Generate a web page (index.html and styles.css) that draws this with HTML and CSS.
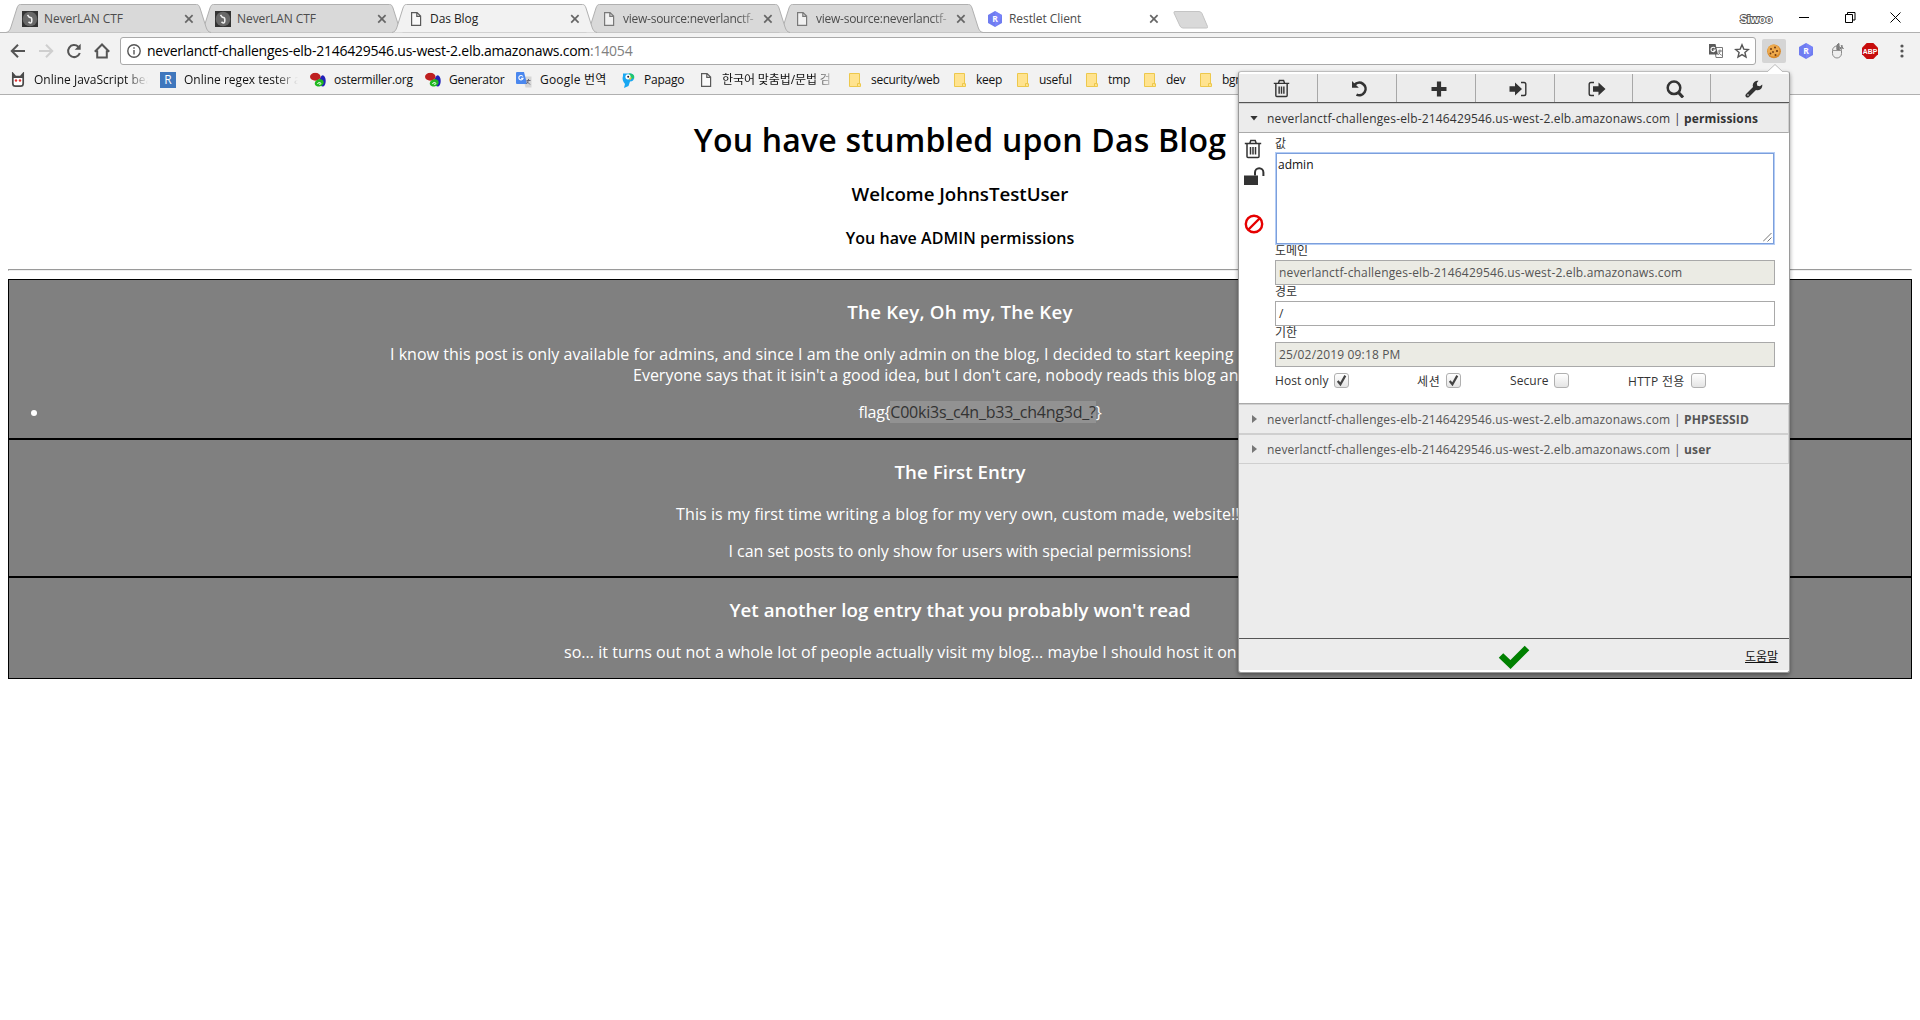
FILE: index.html
```html
<!DOCTYPE html>
<html lang="ko">
<head>
<meta charset="utf-8">
<title>Das Blog</title>
<link rel="stylesheet" href="styles.css">
</head>
<body>
<svg class="defs" width="0" height="0">
  <symbol id="tabshape" viewBox="0 0 205 29"><path d="M0 28.5C3 28 4 26 5 23L11 4C12 1.500 12.500.500 14.500.500H190.500C192.500.500 193 1.500 194 4L200 23C201 26 202 28 205 28.500" /></symbol>
  <symbol id="page" viewBox="0 0 16 16"><path d="M3.600 1.600h5.500l3.500 3.500v9.300h-9zM8.800 1.600v3.800h3.800" fill="#fafafa" stroke="#5a5a5a" stroke-width="1.200"/></symbol>
  <symbol id="x" viewBox="0 0 10 10"><path d="M1.200 1.200l7.400 7.400M8.600 1.200L1.200 8.600" stroke="#666" stroke-width="1.700"/></symbol>
  <symbol id="lan" viewBox="0 0 16 16"><path fill="#333" d="M0 0h16v16H0z"/><circle cx="8" cy="8" r="7.300" fill="#686868"/><path d="M5.500 3.800Q7 6.500 8.500 6.500T9.800 10 6.500 10.800" fill="none" stroke="#eee" stroke-width="1.600"/></symbol>
  <symbol id="hex" viewBox="0 0 16 16"><path d="M8 0l7 4v8l-7 4-7-4V4z" fill="#6f7cf0"/><path d="M8 0l7 4-3 8-4 4z" fill="#7f8aff" opacity=".6"/><text x="8" y="11.300" text-anchor="middle" class="glyph">R</text></symbol>
  <symbol id="oster" viewBox="0 0 17 16"><ellipse cx="13.500" cy="9" rx="3.200" ry="6" fill="#2121b8"/><ellipse cx="5.600" cy="4.500" rx="5.600" ry="4.200" fill="#be2020"/><ellipse cx="9.800" cy="11" rx="4.900" ry="3.800" fill="#20b820" transform="rotate(-18 9.800 11)"/><path d="M8 12.300c0-2 3.500-2.300 3.500-.6 0 1.500-2.300 1.300-2 0" fill="none" stroke="#fff" stroke-width="1"/></symbol>
  <symbol id="folder" viewBox="0 0 16 16"><path d="M2.500 1.500h10v10.500h1v2.500h-11z" fill="#ffe38f" stroke="#edc84c"/><path d="M10.500 14V11.500h3" fill="none" stroke="#edc84c"/></symbol>
  <symbol id="translate" viewBox="0 0 16 16"><path d="M6.500 4.500h8v10H8z" fill="#fff" stroke="#777"/><path d="M1 1h6.500l2.500 10.500H1z" fill="#5b5b5b"/><path d="M7 5.200a2.200 2.200 0 1 0 .3 1.900H5.300" fill="none" stroke="#fff" stroke-width="1.100"/><path d="M10 8h4.200M12 6.500V8c-.2 2-1 3-1.800 4M10.700 9.500c1 1.500 1.600 2 3 2.800" fill="none" stroke="#777"/></symbol>
  <symbol id="trash" viewBox="0 0 18 20"><path d="M3 5v12.500q0 1 1 1h10q1 0 1-1V5M.800 4.600h16.400M5.800 4.200L6.800 1.500h4.400l1 2.700M6.500 8v7.500M9 8v7.500M11.500 8v7.500" fill="none" stroke="#333" stroke-width="1.500"/></symbol>
</svg>

<header class="chrome">
  <div class="tabstrip">
    <div class="tab"><svg class="shape"><use href="#tabshape"/></svg><svg class="fav"><use href="#lan"/></svg><span>NeverLAN CTF</span><svg class="close"><use href="#x"/></svg></div>
    <div class="tab"><svg class="shape"><use href="#tabshape"/></svg><svg class="fav"><use href="#lan"/></svg><span>NeverLAN CTF</span><svg class="close"><use href="#x"/></svg></div>
    <div class="tab active"><svg class="shape"><use href="#tabshape"/></svg><svg class="fav"><use href="#page"/></svg><span>Das Blog</span><svg class="close"><use href="#x"/></svg></div>
    <div class="tab"><svg class="shape"><use href="#tabshape"/></svg><svg class="fav dim"><use href="#page"/></svg><span class="long">view-source:neverlanctf-</span><svg class="close"><use href="#x"/></svg></div>
    <div class="tab"><svg class="shape"><use href="#tabshape"/></svg><svg class="fav dim"><use href="#page"/></svg><span class="long">view-source:neverlanctf-</span><svg class="close"><use href="#x"/></svg></div>
    <div class="tab"><svg class="shape"><use href="#tabshape"/></svg><svg class="fav"><use href="#hex"/></svg><span>Restlet Client</span><svg class="close"><use href="#x"/></svg></div>
    <svg class="newtab" viewBox="0 0 36 18"><path d="M2 .500h24q2 0 3 2l5.500 13q.5 1.500-1 1.500H10q-2 0-3-2L1 2Q.500.500 2 .500z" fill="#d9d9d9" stroke="#c4c4c4"/></svg>
    <div class="window">
      <svg class="user" viewBox="0 0 34 14"><text x="1" y="11">Siwoo</text></svg>
      <svg class="wc" viewBox="0 0 11 11"><path d="M0 5.500h10"/></svg>
      <svg class="wc" viewBox="0 0 11 11"><path d="M.500 2.500h7v8h-7zM2.500 2.500v-2h7.500v7.500h-2.500"/></svg>
      <svg class="wc" viewBox="0 0 11 11"><path d="M.500.500l10 10M10.500.500l-10 10"/></svg>
    </div>
  </div>

  <div class="toolbar">
    <svg class="nav" viewBox="0 0 16 16"><path d="M15 8H2.500M8 1.800L1.800 8 8 14.200"/></svg>
    <svg class="nav off" viewBox="0 0 16 16"><path d="M1 8h12.500M8 1.800L14.200 8 8 14.200"/></svg>
    <svg class="nav" viewBox="0 0 16 16"><path d="M13.800 10A6 6 0 1 1 12.300 3.800"/><path d="M14.700.800v6H8.700z" class="solid"/></svg>
    <svg class="nav" viewBox="0 0 16 16"><path d="M.800 8.700L8 1.500l7.200 7.200M3.200 7.500v7h9.600v-7"/></svg>
    <div class="omnibox">
      <svg class="info" viewBox="0 0 14 14"><circle cx="7" cy="7" r="6.200"/><path d="M7 6v4.500M7 3.300v1.500"/></svg>
      <span class="url">neverlanctf-challenges-elb-2146429546.us-west-2.elb.amazonaws.com<i>:14054</i></span>
      <svg class="act" viewBox="0 0 16 16"><use href="#translate"/></svg>
      <svg class="act star" viewBox="0 0 16 16"><path d="M8 1.800l1.800 4.300 4.600.4-3.500 3 1.100 4.600L8 11.600l-4 2.500 1.100-4.600-3.500-3 4.600-.4z"/></svg>
    </div>
    <div class="ext on"><svg viewBox="0 0 16 16"><circle cx="8" cy="8.300" r="6.900" fill="#d98a2b"/><circle cx="7.500" cy="7.500" r="6" fill="#eda94c"/><g fill="#6e3a14"><circle cx="5" cy="6" r="1"/><circle cx="9" cy="4.500" r="1"/><circle cx="11" cy="8" r="1.100"/><circle cx="7" cy="9" r=".9"/><circle cx="4.500" cy="10.500" r=".9"/><circle cx="9.500" cy="12" r="1"/></g></svg></div>
    <div class="ext"><svg viewBox="0 0 16 16"><use href="#hex"/></svg></div>
    <div class="ext"><svg viewBox="0 0 16 16"><rect x="2.500" y="3" width="9" height="12" rx="4.500" fill="#eee" stroke="#8a8a8a"/><path d="M2.500 7.500h9M7 3v4.500" stroke="#999"/><path d="M7 6.500V2a5 5 0 0 1 2-1.500v6zM8 5h5M9 7.500l3.500-5M11 2l2.500 4" stroke="#777" fill="#888"/></svg></div>
    <div class="ext"><svg viewBox="0 0 16 16"><path d="M4.700 0h6.600L16 4.700v6.600L11.300 16H4.700L0 11.300V4.700z" fill="#c70d0d"/><text x="8" y="10.800" text-anchor="middle" class="glyph abp">ABP</text></svg></div>
    <div class="ext"><svg viewBox="0 0 16 16" fill="#555"><circle cx="8" cy="3" r="1.600"/><circle cx="8" cy="8" r="1.600"/><circle cx="8" cy="13" r="1.600"/></svg></div>
  </div>

  <nav class="bookmarks">
    <a><svg viewBox="0 0 16 16"><path d="M2.800 1.500v10q0 2.700 2.700 2.700h5q2.700 0 2.700-2.700v-10L10.500 4.500h-5z" fill="#fff" stroke="#4a4a4a" stroke-width="1.700"/><path d="M3 2l2 2.500h6L13 2v4H3z" fill="#4a4a4a"/><circle cx="6" cy="8.500" r="1.200" fill="#d33"/><circle cx="10" cy="8.500" r="1.200" fill="#d33"/></svg><span class="fade">Online JavaScript bea</span></a>
    <a><svg viewBox="0 0 16 16"><path d="M0 0h16v16H0z" fill="#3f77bd"/><text x="8" y="12.300" text-anchor="middle" class="rx">R</text></svg><span class="fade">Online regex tester a</span></a>
    <a><svg viewBox="0 0 17 16"><use href="#oster"/></svg><span>ostermiller.org</span></a>
    <a><svg viewBox="0 0 17 16"><use href="#oster"/></svg><span>Generator</span></a>
    <a><svg viewBox="0 0 16 16"><path d="M6.500 4.500h9v11h-6z" fill="#d6d6d6"/><path d="M1 0h7l3 12H1q-1 0-1-1V1q0-1 1-1z" fill="#4a87ee"/><path d="M6.900 4.500a2.200 2.200 0 1 0 .2 1.900H5.200" fill="none" stroke="#fff" stroke-width="1.100"/><path d="M10.500 8.500h4M12.500 7v1.500l-2 3.500M11 9.500l3 3" stroke="#667" fill="none"/></svg><span class="ko">Google 번역</span></a>
    <a><svg viewBox="0 0 16 16"><path d="M3 1.500h7a4 4 0 0 1 0 8L8.500 14 4 16l1-4q-3.500-4-2-8z" fill="#18a7f2"/><path d="M9 1.500h1.500a4 4 0 0 1 3.700 5H9z" fill="#1fc66f"/><circle cx="8" cy="4.800" r="2.600" fill="#fff"/><circle cx="8.200" cy="4.800" r="1" fill="#223"/><path d="M9 6l3-.5-2 3z" fill="#ffc322"/></svg><span>Papago</span></a>
    <a><svg><use href="#page"/></svg><span class="fade kr">한국어 맞춤법/문법 검</span></a>
    <a><svg><use href="#folder"/></svg><span>security/web</span></a>
    <a><svg><use href="#folder"/></svg><span>keep</span></a>
    <a><svg><use href="#folder"/></svg><span>useful</span></a>
    <a><svg><use href="#folder"/></svg><span>tmp</span></a>
    <a><svg><use href="#folder"/></svg><span>dev</span></a>
    <a><svg><use href="#folder"/></svg><span>bgm</span></a>
  </nav>
</header>

<main class="page">
  <h1>You have stumbled upon Das Blog</h1>
  <h3 class="welcome">Welcome JohnsTestUser</h3>
  <h4>You have ADMIN permissions</h4>
  <hr>
  <section class="post">
    <h3 class="key">The Key, Oh my, The Key</h3>
    <p><span class="line one">I know this post is only available for admins, and since I am the only admin on the blog, I decided to start keeping</span><br><span class="line two">Everyone says that it isin't a good idea, but I don't care, nobody reads this blog anyway.</span></p>
    <ul><li>flag{<mark>C00ki3s_c4n_b33_ch4ng3d_?</mark>}</li></ul>
  </section>
  <section class="post">
    <h3>The First Entry</h3>
    <p class="first">This is my first time writing a blog for my very own, custom made, website!!!</p>
    <p class="set">I can set posts to only show for users with special permissions!</p>
  </section>
  <section class="post last">
    <h3>Yet another log entry that you probably won't read</h3>
    <p><span class="line three">so... it turns out not a whole lot of people actually visit my blog... maybe I should host it on</span></p>
  </section>
</main>

<aside class="popup">
  <svg class="arrow" viewBox="0 0 16 8"><path d="M0 8L8 .500 16 8" fill="#fff" stroke="#bbb"/></svg>
  <div class="tools">
    <div><svg class="narrow" viewBox="0 0 18 20"><use href="#trash"/></svg></div>
    <div><svg viewBox="0 0 18 18"><path d="M3.500 4.800A6.300 6.300 0 1 1 5.500 14.600" fill="none" stroke="#333" stroke-width="2.600"/><path d="M1 1v6.800h6.800z" fill="#333"/></svg></div>
    <div><svg viewBox="0 0 18 18"><path d="M9 1.500v15M1.500 9h15" stroke="#333" stroke-width="4.200"/></svg></div>
    <div><svg viewBox="0 0 18 18"><path d="M.500 6.200H6V2.500L13 9l-7 6.500v-3.700H.500z" fill="#333"/><path d="M12 2.500h3q1.800 0 1.800 1.800v9.400q0 1.800-1.800 1.800h-3" fill="none" stroke="#333" stroke-width="1.400"/></svg></div>
    <div><svg viewBox="0 0 18 18"><path d="M5 6.200h5.500V2.500l7 6.500-7 6.500v-3.700H5z" fill="#333"/><path d="M6 2.500H3Q1.200 2.500 1.200 4.300v9.400q0 1.800 1.800 1.800h3" fill="none" stroke="#333" stroke-width="1.400"/></svg></div>
    <div><svg viewBox="0 0 18 18"><circle cx="8" cy="7.800" r="6.300" fill="none" stroke="#333" stroke-width="2.500"/><path d="M12 12l5 5.500" stroke="#333" stroke-width="3"/></svg></div>
    <div><svg viewBox="0 0 18 18"><path d="M2.500 15.500L10.500 7.500" stroke="#333" stroke-width="4" stroke-linecap="round"/><path d="M17.200 4.500A4.800 4.800 0 1 1 13.500.800L11.800 3l.5 2.700 2.700.500z" fill="#333"/><circle cx="3" cy="15" r=".8" fill="#ececec"/></svg></div>
  </div>
  <div class="row open"><i class="tri down"></i><span>neverlanctf-challenges-elb-2146429546.us-west-2.elb.amazonaws.com</span><em>|</em><b>permissions</b></div>
  <div class="detail">
    <div class="side">
      <svg width="18" height="20"><use href="#trash"/></svg>
      <svg class="lock" width="21" height="18" viewBox="0 0 21 18"><path d="M0 8.500h14V18H0z" fill="#333"/><path d="M11 8.500V5.500a4.200 4.200 0 0 1 8.400 0V9" fill="none" stroke="#333" stroke-width="2"/></svg>
      <svg class="ban" width="20" height="20" viewBox="0 0 20 20"><circle cx="10" cy="10" r="8.200" fill="none" stroke="#e60000" stroke-width="2.400"/><path d="M4.500 15.500l11-11" stroke="#e60000" stroke-width="2.400"/></svg>
    </div>
    <div class="fields">
      <label class="first">값</label>
      <div class="area">admin<svg viewBox="0 0 9 9"><path d="M0 8.500L8.500 0M4.500 8.500l4-4" stroke="#777"/></svg></div>
      <label>도메인</label>
      <div class="input ro">neverlanctf-challenges-elb-2146429546.us-west-2.elb.amazonaws.com</div>
      <label>경로</label>
      <div class="input">/</div>
      <label>기한</label>
      <div class="input ro">25/02/2019 09:18 PM</div>
      <div class="checks">
        <div>Host only<i class="cb"><svg viewBox="0 0 12 12"><path d="M2.500 6.500l2.500 3 4.500-8"/></svg></i></div>
        <div class="kr">세션<i class="cb"><svg viewBox="0 0 12 12"><path d="M2.500 6.500l2.500 3 4.500-8"/></svg></i></div>
        <div>Secure<i class="cb"></i></div>
        <div class="kr">HTTP 전용<i class="cb"></i></div>
      </div>
    </div>
  </div>
  <div class="row"><i class="tri"></i><span>neverlanctf-challenges-elb-2146429546.us-west-2.elb.amazonaws.com</span><em>|</em><b class="sess">PHPSESSID</b></div>
  <div class="row"><i class="tri"></i><span>neverlanctf-challenges-elb-2146429546.us-west-2.elb.amazonaws.com</span><em>|</em><b>user</b></div>
  <footer>
    <svg width="32" height="25" viewBox="0 0 32 25"><path d="M3 11.500l9.500 9L29 4" fill="none" stroke="#008000" stroke-width="6.500" stroke-linejoin="miter"/></svg>
    <a>도움말</a>
  </footer>
</aside>
</body>
</html>
```
FILE: styles.css
```css
* { box-sizing: border-box; }
body { margin: 0; background: #fff; color: #000; font-family: "Open Sans", "Noto Sans CJK KR", sans-serif; overflow: hidden; height: 1020px; }
svg { display: block; flex: none; }
.defs { position: absolute; }
.glyph { font: bold 8.500px "Open Sans", sans-serif; fill: #fff; }
.abp { font: bold 6.800px "Liberation Sans", sans-serif; }
.rx { font: 12px "Open Sans", sans-serif; fill: #fff; }

/* browser frame */
.chrome { height: 95px; background: #f2f2f2; border-bottom: 1px solid #b0b0b0; font-size: 12px; }
.tabstrip { height: 33px; background: #fff; border-bottom: 1px solid #b0b0b0; display: flex; padding: 4px 0 0 6px; }
.tab { position: relative; width: 205px; height: 29px; margin-right: -12px; display: flex; align-items: center; padding: 0 17px 0 16px; flex: none; color: #4c4c4c; }
.tab:nth-child(1) { z-index: 4; }
.tab:nth-child(2) { z-index: 3; }
.tab:nth-child(4) { z-index: 2; }
.tab:nth-child(5) { z-index: 1; }
.tab.active { z-index: 5; color: #222; }
.shape { position: absolute; inset: 0; width: 205px; height: 29px; fill: #d9d9d9; stroke: #b0b0b0; z-index: -1; }
.active .shape { fill: #f2f2f2; }
.fav { width: 16px; height: 16px; margin-right: 6px; }
.fav.dim { opacity: .75; }
.tab span { flex: 1; white-space: nowrap; overflow: hidden; line-height: 20px; letter-spacing: -0.07px; }
.tab .long { letter-spacing: -0.25px; -webkit-mask-image: linear-gradient(90deg, #000 115px, rgba(0,0,0,.3) 132px); }
.close { width: 10px; height: 10px; }
.newtab { width: 36px; height: 18px; margin: 7px 0 0 9px; }
.window { margin-left: auto; display: flex; padding: 8px 19px 0 0; }
.user { width: 34px; height: 14px; margin-right: 26px; }
.user text { font: bold 11px "Liberation Sans", sans-serif; fill: #fff; stroke: #555; stroke-width: 1.800px; paint-order: stroke; }
.wc { width: 11px; height: 11px; margin-right: 34.500px; fill: none; stroke: #000; stroke-width: 1; }
.wc:last-child { margin-right: 0; }

.toolbar { height: 34px; display: flex; align-items: center; padding: 2px 6px 0 10px; }
.nav { width: 16px; height: 16px; margin-right: 12px; fill: none; stroke: #555; stroke-width: 2; }
.nav:nth-child(4) { margin-right: 10px; }
.nav.off { stroke: #cfcfcf; }
.nav .solid { fill: #555; stroke: none; }
.omnibox { width: 1636px; height: 28px; border: 1px solid #a9a9a9; border-radius: 3px; background: #fff; display: flex; align-items: center; padding: 0 5px 0 6px; margin-right: 6px; }
.info { width: 14px; height: 14px; fill: none; stroke: #555; stroke-width: 1.400; }
.url { font-size: 14px; letter-spacing: -0.235px; line-height: 20px; margin-left: 6px; flex: 1; }
.url i { font-style: normal; color: #808080; }
.act { width: 16px; height: 16px; }
.star { margin-left: 10px; fill: none; stroke: #555; stroke-width: 1.400; }
.ext { width: 24px; height: 24px; margin-right: 8px; padding: 4px; border-radius: 2px; flex: none; }
.ext svg { width: 16px; height: 16px; }
.ext.on { background: #d5d5d5; }
.ext:last-child { margin-right: 0; }

.bookmarks { height: 26px; padding-left: 10px; display: grid; grid-template-columns: 150px 150px 115px 91px 104px 78px 149px 105px 63px 69px 58px 56px 60px; align-items: center; color: #111; }
.bookmarks a { display: flex; align-items: center; gap: 8px; }
.bookmarks svg { width: 16px; height: 16px; }
.bookmarks span { white-space: nowrap; line-height: 20px; letter-spacing: -0.25px; }
.bookmarks .ko { letter-spacing: 0.2px; }
.bookmarks .fade { width: 118px; letter-spacing: 0; -webkit-mask-image: linear-gradient(90deg, #000 92px, transparent 114px); }
.bookmarks .kr { letter-spacing: -0.1px; }

/* blog page */
.page { padding: 0 8px; text-align: center; font-size: 16px; line-height: 21px; }
.page h1, .page h3, .page h4 { font-weight: 600; margin: 0; }
.page h1 { font-size: 32px; line-height: 43px; padding: 23px 0 19px; letter-spacing: 0.2px; }
.page h3 { font-size: 18.720px; line-height: 25px; padding: 19px 0 20px; letter-spacing: 0.05px; }
.page .welcome { padding: 1px 0 22px; letter-spacing: -0.03px; }
.page h4 { font-size: 16px; line-height: 21px; padding-bottom: 20px; letter-spacing: 0.06px; }
.page hr { margin: 0 0 8px; border: 1px inset #eee; }
.post { background: #808080; color: #fff; border: 1px solid #000; }
.post .key { letter-spacing: 0.2px; }
.post p { margin: 0 0 15px; }
.post .first { letter-spacing: 0.075px; }
.line { display: inline-block; text-align: left; white-space: nowrap; }
.one { width: 1140px; height: 21px; letter-spacing: 0.03px; }
.two { width: 654px; }
.three { width: 792px; letter-spacing: 0.035px; }
.post .set { letter-spacing: -0.04px; margin-top: 16px; margin-bottom: 14px; }
.post ul { margin: 16px 0 15px; padding-left: 40px; letter-spacing: -0.24px; }
mark { background: #929292; color: #333; }

/* cookie editor popup */
.popup { position: absolute; left: 1238px; top: 71px; width: 552px; height: 602px; border: 1px solid #9a9a9a; border-top-color: #bdbdbd; border-radius: 3px; box-shadow: 0 2px 4px rgba(0,0,0,.4); font-size: 12px; color: #333; display: flex; flex-direction: column; padding: 2px 0; background: linear-gradient(#fff 2px, #ececec 2px, #ececec 598px, #fff 598px); }
.arrow { position: absolute; left: 528px; top: -8px; width: 16px; height: 8px; }
.tools { height: 29px; display: grid; grid-template-columns: 79px 79px 79px 79px 78px 78px 78px; border-bottom: 1px solid #555; flex: none; }
.tools div { border-right: 1px solid #a8a8a8; display: flex; justify-content: center; align-items: center; padding: 1px 0 0 6px; }
.tools div:last-child { border-right: 0; padding-left: 8px; }
.tools svg { width: 18px; height: 18px; }
.tools .narrow { width: 17px; height: 19px; }
.row { height: 30px; flex: none; display: flex; align-items: center; border: 1px solid #cfcfcf; border-width: 1px 1px 1px 0; color: #555; letter-spacing: 0.16px; padding: 0 0 0 13px; }
.row.open { color: #333; border-bottom-color: #aaa; }
.row span { margin-left: 10px; width: 407px; white-space: nowrap; }
.row em { font-style: normal; width: 10px; }
.row b { letter-spacing: 0.15px; }
.tri { width: 5px; height: 8px; background: #777; clip-path: polygon(0 0, 100% 50%, 0 100%); }
.tri.down { width: 8px; height: 5px; background: #333; clip-path: polygon(0 0, 100% 0, 50% 100%); margin: 0 -1px 0 -2px; }
.detail { height: 271px; flex: none; background: #fff; display: flex; border-bottom: 1px solid #aaa; }
.side { width: 36px; padding: 6px 0 0 5px; }
.lock { margin-top: 8px; }
.ban { margin-top: 29px; }
.fields { width: 500px; }
.fields label { display: block; height: 16px; line-height: 14px; }
.fields .first { padding-top: 4px; height: 19px; }
.area { position: relative; height: 93px; border: 2px solid #7c9fdc; outline: 1px solid #b4cdf5; outline-offset: -1px; margin-bottom: -1px; padding: 3px 1px; line-height: 16px; color: #111; }
.area svg { position: absolute; right: 1px; bottom: 1px; width: 9px; height: 9px; }
.input { height: 25px; border: 1px solid #a9a9a9; padding: 0 3px; line-height: 23px; letter-spacing: 0.16px; }
.ro { background: #ebebe4; color: #545454; }
.checks { display: grid; grid-template-columns: 142px 93px 118px auto; padding-top: 5px; }
.checks div { display: flex; align-items: center; gap: 5px; height: 17px; letter-spacing: 0.08px; }
.checks .kr { gap: 6px; letter-spacing: 0.6px; }
.checks .kr:last-child { letter-spacing: 0.3px; }
.cb { width: 15px; height: 15px; border: 1px solid #b0b0b0; border-radius: 3px; background: linear-gradient(#fff, #e4e4e4); }
.cb svg { width: 13px; height: 13px; fill: none; stroke: #444; stroke-width: 2; }
.popup footer { margin-top: auto; height: 32px; border-top: 1px solid #555; flex: none; display: grid; grid-template-columns: 259px auto 44px; align-items: center; }
.popup footer svg { grid-column: 2; margin-top: 3px; }
.popup footer a { text-decoration: underline; color: #111; white-space: nowrap; padding-top: 3px; }
```
